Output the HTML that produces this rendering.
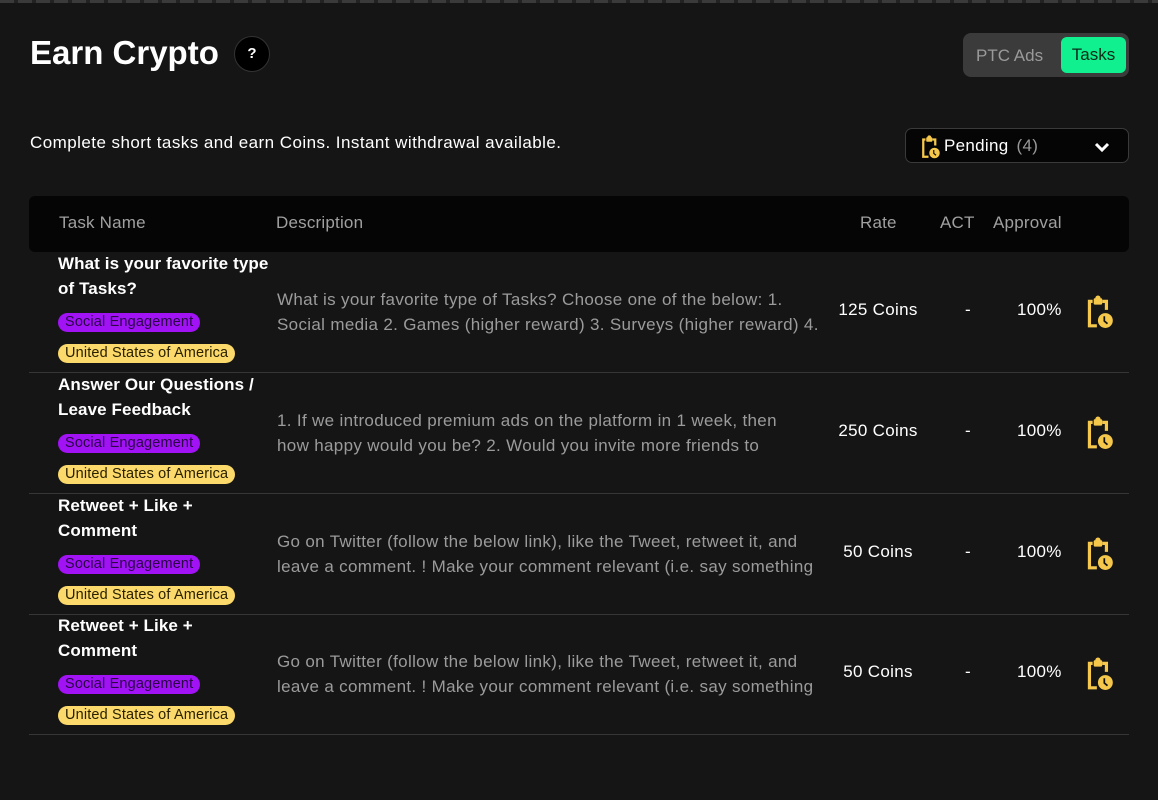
<!DOCTYPE html>
<html><head><meta charset="utf-8"><style>
*{margin:0;padding:0;box-sizing:border-box}
body{width:1158px;height:800px;background:#151515;font-family:"Liberation Sans",Arial,sans-serif;color:#fff;position:relative;overflow:hidden}
.abs{position:absolute}
.topline{top:0;left:0;width:1158px;height:3px;background:repeating-linear-gradient(90deg,#3a3a3a 0 14px,#222 14px 18px)}
h1{position:absolute;left:30px;top:34px;font-size:33px;font-weight:bold;letter-spacing:0}
.q{left:234px;top:36px;width:36px;height:36px;border-radius:50%;background:#000;border:1px solid #333;font-size:15px;font-weight:bold;text-align:center;line-height:34px}
.tog{left:963px;top:33px;width:166px;height:44px;background:#3b3b3b;border-radius:8px}
.tog .p{position:absolute;left:13px;top:13px;font-size:17px;color:#9a9a9a}
.tog .t{position:absolute;left:98px;top:4px;width:65px;height:36px;background:#10f08e;border-radius:6px;color:#0a2a18;font-size:17px;text-align:center;line-height:36px}
.sub{left:30px;top:133px;font-size:17px;letter-spacing:0.45px}
.pend{left:905px;top:128px;width:224px;height:35px;background:#050505;border:1px solid #3a3a3a;border-radius:7px}
.pend .lbl{position:absolute;left:38px;top:7px;font-size:17px;letter-spacing:0.3px}
.pend .lbl span{color:#999;margin-left:8px}
.th{left:29px;top:196px;width:1100px;height:56px;background:#050505;border-radius:6px;font-size:17px;color:#a0a0a0;letter-spacing:0.2px}
.th div{position:absolute;top:17px}
.row{position:absolute;left:29px;width:1100px;height:121px;border-bottom:1px solid #363636}
.title{position:absolute;left:29px;top:0px;font-size:17px;font-weight:bold;line-height:24.5px;letter-spacing:0.1px;white-space:nowrap}
.tag{position:absolute;left:29px;height:19px;border-radius:10px;font-size:14.5px;line-height:19px;padding:0 7px;letter-spacing:0.15px}
.se{background:#a113f5;color:#2a0645;top:61px}
.us{background:#fbd96a;color:#2a2000;top:92px}
.desc{position:absolute;left:248px;top:36px;width:560px;font-size:17px;line-height:24.5px;color:#9b9b9b;white-space:nowrap;letter-spacing:0.33px}
.rate{position:absolute;left:790px;width:118px;text-align:center;top:48px;font-size:17px;letter-spacing:0.3px}
.act{position:absolute;left:936px;top:48px;font-size:17px}
.ap{position:absolute;left:988px;top:48px;font-size:17px;letter-spacing:0.3px}
.ic{position:absolute;left:1055px;top:43px}
</style></head><body>
<div class="abs topline"></div>
<h1>Earn Crypto</h1>
<div class="abs q">?</div>
<div class="abs tog"><div class="p">PTC Ads</div><div class="t">Tasks</div></div>
<div class="abs sub">Complete short tasks and earn Coins. Instant withdrawal available.</div>
<div class="abs pend">
<svg class="abs" style="left:14px;top:6px" width="20" height="24" viewBox="0 0 26 32"><path d="M7 6H4V29H11" fill="none" stroke="#f5c84c" stroke-width="3"/><path d="M16 6H20V14" fill="none" stroke="#f5c84c" stroke-width="3"/><rect x="8" y="3" width="8" height="6" rx="1" fill="#f5c84c"/><circle cx="12" cy="3" r="2.5" fill="#f5c84c"/><circle cx="19" cy="24" r="7" fill="#f5c84c"/><path d="M18 20V24.5L21 27" stroke="#111" stroke-width="1.6" fill="none"/></svg>
<div class="lbl">Pending<span>(4)</span></div>
<svg class="abs" style="left:188px;top:13px" width="16" height="11" viewBox="0 0 16 11"><path d="M2 2L8 8L14 2" fill="none" stroke="#fff" stroke-width="3"/></svg>
</div>
<div class="abs th"><div style="left:30px">Task Name</div><div style="left:247px">Description</div><div style="left:831px">Rate</div><div style="left:911px">ACT</div><div style="left:964px">Approval</div></div>

<div class="row" style="top:252px"><div class="title">What is your favorite type<br>of Tasks?</div><div class="tag se">Social Engagement</div><div class="tag us">United States of America</div><div class="desc">What is your favorite type of Tasks? Choose one of the below: 1.<br>Social media 2. Games (higher reward) 3. Surveys (higher reward) 4.</div><div class="rate">125 Coins</div><div class="act">-</div><div class="ap">100%</div>
<svg class="ic" width="30" height="34" viewBox="0 0 26 32"><path d="M7 6H4V29H11" fill="none" stroke="#f5c84c" stroke-width="3"/><path d="M16 6H20V14" fill="none" stroke="#f5c84c" stroke-width="3"/><rect x="8" y="3" width="8" height="6" rx="1" fill="#f5c84c"/><circle cx="12" cy="3" r="2.5" fill="#f5c84c"/><circle cx="19" cy="24" r="7" fill="#f5c84c"/><path d="M18 20V24.5L21 27" stroke="#111" stroke-width="1.6" fill="none"/></svg></div>

<div class="row" style="top:373px"><div class="title">Answer Our Questions /<br>Leave Feedback</div><div class="tag se">Social Engagement</div><div class="tag us">United States of America</div><div class="desc">1. If we introduced premium ads on the platform in 1 week, then<br>how happy would you be? 2. Would you invite more friends to</div><div class="rate">250 Coins</div><div class="act">-</div><div class="ap">100%</div>
<svg class="ic" width="30" height="34" viewBox="0 0 26 32"><path d="M7 6H4V29H11" fill="none" stroke="#f5c84c" stroke-width="3"/><path d="M16 6H20V14" fill="none" stroke="#f5c84c" stroke-width="3"/><rect x="8" y="3" width="8" height="6" rx="1" fill="#f5c84c"/><circle cx="12" cy="3" r="2.5" fill="#f5c84c"/><circle cx="19" cy="24" r="7" fill="#f5c84c"/><path d="M18 20V24.5L21 27" stroke="#111" stroke-width="1.6" fill="none"/></svg></div>

<div class="row" style="top:494px"><div class="title">Retweet + Like +<br>Comment</div><div class="tag se">Social Engagement</div><div class="tag us">United States of America</div><div class="desc">Go on Twitter (follow the below link), like the Tweet, retweet it, and<br>leave a comment. ! Make your comment relevant (i.e. say something</div><div class="rate">50 Coins</div><div class="act">-</div><div class="ap">100%</div>
<svg class="ic" width="30" height="34" viewBox="0 0 26 32"><path d="M7 6H4V29H11" fill="none" stroke="#f5c84c" stroke-width="3"/><path d="M16 6H20V14" fill="none" stroke="#f5c84c" stroke-width="3"/><rect x="8" y="3" width="8" height="6" rx="1" fill="#f5c84c"/><circle cx="12" cy="3" r="2.5" fill="#f5c84c"/><circle cx="19" cy="24" r="7" fill="#f5c84c"/><path d="M18 20V24.5L21 27" stroke="#111" stroke-width="1.6" fill="none"/></svg></div>

<div class="row" style="top:614px"><div class="title">Retweet + Like +<br>Comment</div><div class="tag se">Social Engagement</div><div class="tag us">United States of America</div><div class="desc">Go on Twitter (follow the below link), like the Tweet, retweet it, and<br>leave a comment. ! Make your comment relevant (i.e. say something</div><div class="rate">50 Coins</div><div class="act">-</div><div class="ap">100%</div>
<svg class="ic" width="30" height="34" viewBox="0 0 26 32"><path d="M7 6H4V29H11" fill="none" stroke="#f5c84c" stroke-width="3"/><path d="M16 6H20V14" fill="none" stroke="#f5c84c" stroke-width="3"/><rect x="8" y="3" width="8" height="6" rx="1" fill="#f5c84c"/><circle cx="12" cy="3" r="2.5" fill="#f5c84c"/><circle cx="19" cy="24" r="7" fill="#f5c84c"/><path d="M18 20V24.5L21 27" stroke="#111" stroke-width="1.6" fill="none"/></svg></div>
</body></html>
